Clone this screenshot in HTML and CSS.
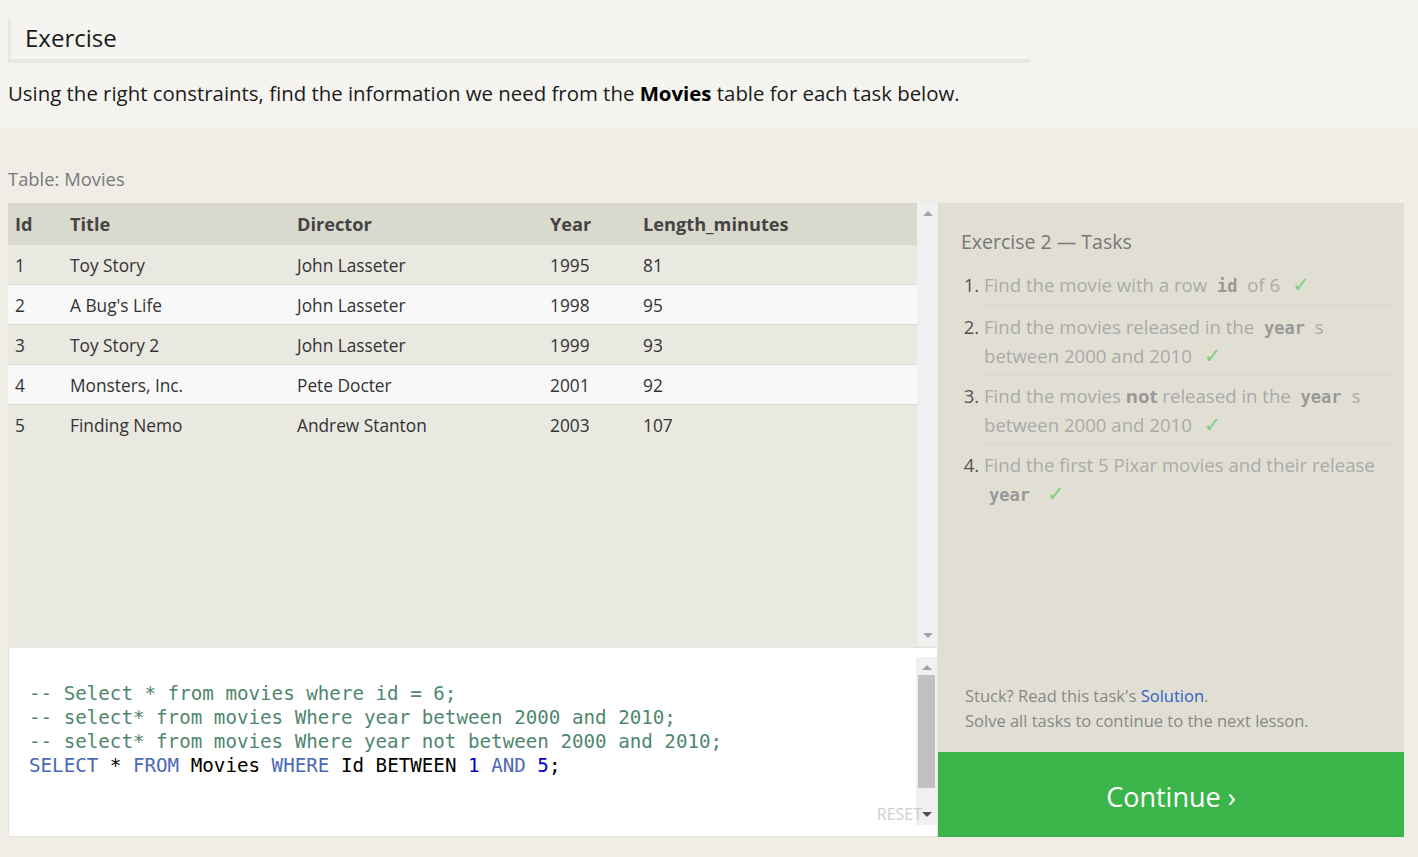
FILE: index.html
```html
<!DOCTYPE html>
<html lang="en">
<head>
<meta charset="utf-8">
<title>SQL Lesson — Exercise</title>
<link rel="stylesheet" href="styles.css">
</head>
<body>
<section class="top">
  <h1 class="ex-title">Exercise</h1>
  <p class="intro">Using the right constraints, find the information we need from the <strong>Movies</strong> table for each task below.</p>
</section>
<section class="main">
  <div class="table-label">Table: Movies</div>
  <div class="workspace">
    <div class="left">
      <div class="table-pane">
        <table class="movies">
          <colgroup><col class="c-id"><col class="c-title"><col class="c-dir"><col class="c-year"><col class="c-len"></colgroup>
          <thead>
            <tr><th>Id</th><th>Title</th><th>Director</th><th>Year</th><th>Length_minutes</th></tr>
          </thead>
          <tbody>
            <tr class="odd"><td>1</td><td>Toy Story</td><td>John Lasseter</td><td>1995</td><td>81</td></tr>
            <tr class="even"><td>2</td><td>A Bug's Life</td><td>John Lasseter</td><td>1998</td><td>95</td></tr>
            <tr class="odd"><td>3</td><td>Toy Story 2</td><td>John Lasseter</td><td>1999</td><td>93</td></tr>
            <tr class="even"><td>4</td><td>Monsters, Inc.</td><td>Pete Docter</td><td>2001</td><td>92</td></tr>
            <tr class="odd"><td>5</td><td>Finding Nemo</td><td>Andrew Stanton</td><td>2003</td><td>107</td></tr>
          </tbody>
        </table>
        <div class="vscroll">
          <span class="arrow up"></span>
          <span class="track"></span>
          <span class="arrow down"></span>
        </div>
      </div>
      <div class="editor">
        <pre class="code"><span class="cm">-- Select * from movies where id = 6;</span>
<span class="cm">-- select* from movies Where year between 2000 and 2010;</span>
<span class="cm">-- select* from movies Where year not between 2000 and 2010;</span>
<span class="kw">SELECT</span> * <span class="kw">FROM</span> Movies <span class="kw">WHERE</span> Id BETWEEN <span class="num">1</span> <span class="kw">AND</span> <span class="num">5</span>;</pre>
        <div class="vscroll ed-scroll">
          <span class="arrow up"></span>
          <span class="track"><span class="thumb"></span></span>
          <span class="arrow down"></span>
        </div>
        <span class="reset">RESET</span>
      </div>
    </div>
    <div class="right">
      <div class="tasks">
        <h2 class="tasks-title">Exercise 2 — Tasks</h2>
        <ol class="task-list">
          <li>Find the movie with a row <code>id</code> of 6<span class="check">✓</span></li>
          <li>Find the movies released in the <code>year</code> s between 2000 and 2010<span class="check">✓</span></li>
          <li>Find the movies <b>not</b> released in the <code>year</code> s between 2000 and 2010<span class="check">✓</span></li>
          <li>Find the first 5 Pixar movies and their release <code>year</code><span class="check">✓</span></li>
        </ol>
        <div class="help">
          <p>Stuck? Read this task's <a href="#">Solution</a>.</p>
          <p>Solve all tasks to continue to the next lesson.</p>
        </div>
      </div>
      <a class="continue" href="#">Continue ›</a>
    </div>
  </div>
</section>
</body>
</html>
```
FILE: styles.css
```css
* { box-sizing: border-box; }
html, body { margin: 0; padding: 0; }
body {
  font-family: "Open Sans", "Noto Sans", sans-serif;
  background: #efede6;
  color: #222;
  width: 1418px;
  height: 857px;
  overflow: hidden;
}

.top {
  background: #f5f4f0;
  height: 128px;
  padding: 19px 8px 0;
}
.ex-title {
  margin: 0;
  width: 1022px;
  height: 44px;
  border-left: 3px solid #e8e7df;
  border-bottom: 4px solid #e8e7df;
  padding: 3px 0 0 14px;
  font-weight: 400;
  font-size: 24px;
  line-height: 32px;
  color: #1a1a1a;
}
.intro {
  margin: 16px 0 0;
  font-size: 20.4px;
  line-height: 28px;
  color: #1a1a1a;
}
.intro strong { font-weight: 700; color: #000; }

.main { padding: 0 8px; }
.table-label {
  height: 75px;
  padding-top: 38px;
  font-size: 18.4px;
  line-height: 26px;
  color: #7a7a7a;
}

.workspace {
  display: grid;
  grid-template-columns: 930px 466px;
  height: 634px;
}
.left { display: flex; flex-direction: column; }
.table-pane {
  display: flex;
  height: 443px;
  background: #e9e8e1;
}
.movies {
  width: 909px;
  border-collapse: separate;
  border-spacing: 0;
  table-layout: fixed;
  align-self: flex-start;
  font-size: 17.3px;
  color: #333;
}
.c-id { width: 55px; }
.c-title { width: 227px; }
.c-dir { width: 253px; }
.c-year { width: 93px; }
.movies th {
  background: #dad9cd;
  height: 42px;
  text-align: left;
  font-weight: 700;
  color: #444;
  padding: 0 0 0 7px;
  font-size: 18.2px;
}
.movies td {
  height: 40px;
  padding: 1px 0 0 7px;
  border-bottom: 1px solid #dcdcd6;
}
.movies tr.odd td { background: #e9e8e1; }
.movies tr.even td { background: #f8f8f8; }
.movies tr:last-child td { border-bottom: none; }

.vscroll {
  width: 21px;
  background: #f0f0f0;
  display: flex;
  flex-direction: column;
  align-items: center;
}
.vscroll .track { flex: 1; width: 100%; display: flex; justify-content: center; }
.arrow { width: 0; height: 0; border-left: 5px solid transparent; border-right: 5px solid transparent; margin: 8px 0; }
.arrow.up { border-bottom: 5px solid #a3a3a3; }
.arrow.down { border-top: 5px solid #a3a3a3; }

.editor {
  margin-top: 1px;
  height: 190px;
  background: #fff;
  border: 1px solid #e3e2dc;
  position: relative;
  display: flex;
  justify-content: space-between;
  padding: 9px 0 11px 20px;
}
.code {
  margin: 0;
  padding-top: 25px;
  font-family: "DejaVu Sans Mono", "Liberation Mono", monospace;
  font-size: 19.2px;
  line-height: 24px;
  color: #000;
}
.cm { color: #4f876e; }
.kw { color: #4b68b8; }
.num { color: #0000cc; }
.ed-scroll { height: 100%; }
.ed-scroll .arrow.up { margin-bottom: 5px; }
.ed-scroll .arrow.down { border-top-color: #505050; }
.ed-scroll .track { padding: 0 2px 0 2px; }
.thumb { display: block; width: 17px; height: 113px; background: #c1c1c1; }
.reset {
  position: absolute;
  right: 15px;
  bottom: 12px;
  font-size: 16px;
  line-height: 20px;
  color: #cfcfcf;
}

.right { display: flex; flex-direction: column; }
.tasks {
  flex: 1;
  background: #e1dfd4;
  padding: 26px 11px 0 23px;
  display: flex;
  flex-direction: column;
}
.tasks-title {
  margin: 0;
  font-weight: 400;
  font-size: 19.5px;
  line-height: 26px;
  color: #777;
}
.task-list {
  margin: 9px 0 0;
  padding: 0 0 0 23px;
  font-size: 18.6px;
  line-height: 29px;
}
.task-list li {
  color: #aaa;
  padding: 6px 0 4px;
  border-bottom: 1px solid #d6d5ca;
}
.task-list li::marker { color: #555; }
.task-list li:first-child { padding-bottom: 6px; }
.task-list li:last-child { border-bottom: none; }
.task-list b { color: #999; }
.task-list code {
  font-family: "DejaVu Sans Mono", "Liberation Mono", monospace;
  font-weight: 700;
  font-size: 17px;
  line-height: 1;
  color: #999;
  margin: 0 5px;
}
.check {
  font-family: "DejaVu Sans", sans-serif;
  font-size: 21px;
  line-height: 1;
  color: #7fcf80;
  margin-left: 12px;
}
.help {
  margin-top: auto;
  padding: 0 0 19px 4px;
  font-size: 16.5px;
  line-height: 25px;
  color: #888;
}
.help p { margin: 0; }
.help a { color: #2f63c7; text-decoration: none; }
.continue {
  height: 85px;
  padding-top: 4px;
  background: #3bb44a;
  color: #fff;
  font-size: 27px;
  text-decoration: none;
  display: flex;
  align-items: center;
  justify-content: center;
}
```
